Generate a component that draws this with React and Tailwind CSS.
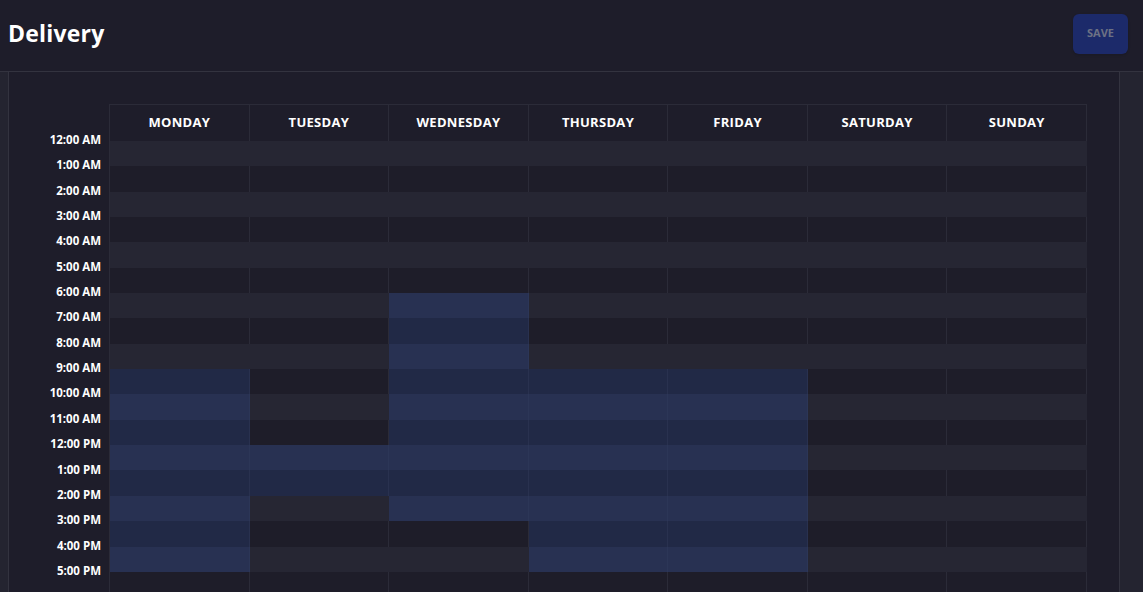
import React from 'react';

const days = ['Monday', 'Tuesday', 'Wednesday', 'Thursday', 'Friday', 'Saturday', 'Sunday'];

const hours = [
  '12:00 AM', '1:00 AM', '2:00 AM', '3:00 AM', '4:00 AM', '5:00 AM',
  '6:00 AM', '7:00 AM', '8:00 AM', '9:00 AM', '10:00 AM', '11:00 AM',
  '12:00 PM', '1:00 PM', '2:00 PM', '3:00 PM', '4:00 PM', '5:00 PM', '6:00 PM',
];

// delivery windows per day as [startRow, endRow) in hours
const windows = [
  [9, 17],
  [12, 14],
  [6, 15],
  [9, 17],
  [9, 17],
  null,
  null,
];

function isOn(dayIdx, row) {
  const w = windows[dayIdx];
  return w && row >= w[0] && row < w[1];
}

function cellClass(dayIdx, row) {
  const even = row % 2 === 0;
  if (isOn(dayIdx, row)) {
    return even
      ? 'bg-[#283152] border-[#2c3657]'
      : 'bg-[#212946] border-[#29314f]';
  }
  return even
    ? 'bg-[#262633] border-[#262633]'
    : 'bg-[#1e1d29] border-[#2b2b38]';
}

export default function App() {
  return (
    <div
      className="h-[592px] overflow-hidden bg-[#242430] text-white"
      style={{ fontFamily: '"Open Sans", "Noto Sans", sans-serif' }}
    >
      <header className="flex h-[72px] items-center justify-between border-b border-[#33333f] bg-[#1e1d2a] pb-1 pl-2 pr-[15px]">
        <h1 className="text-[23px] font-bold tracking-[0.2px]">Delivery</h1>
        <button className="h-10 w-[55px] rounded-md bg-[#1c2a6a] text-[11px] font-bold text-[#6c7184] shadow-sm">
          SAVE
        </button>
      </header>

      <div className="ml-2 mr-[23px] flex h-[520px] border-x border-[#33333f] bg-[#1e1d2a] pt-8">
        <div className="w-[100px] shrink-0 pt-[23px] pr-2">
          {hours.slice(0, 18).map((h) => (
            <div
              key={h}
              className="flex h-[25.35px] items-center justify-end text-[11.5px] font-bold whitespace-nowrap"
            >
              {h}
            </div>
          ))}
        </div>

        <div className="w-[978px] shrink-0 border-l border-t border-[#2b2b38]">
          <div className="grid h-9 grid-cols-7">
            {days.map((d) => (
              <div
                key={d}
                className="flex items-center justify-center border-r border-[#2b2b38] text-[13px] font-bold uppercase tracking-[0.3px]"
              >
                {d}
              </div>
            ))}
          </div>
          {hours.map((h, row) => (
            <div key={h} className="grid h-[25.35px] grid-cols-7">
              {days.map((d, i) => (
                <div key={d} className={`border-r ${cellClass(i, row)}`} />
              ))}
            </div>
          ))}
        </div>
      </div>
    </div>
  );
}
